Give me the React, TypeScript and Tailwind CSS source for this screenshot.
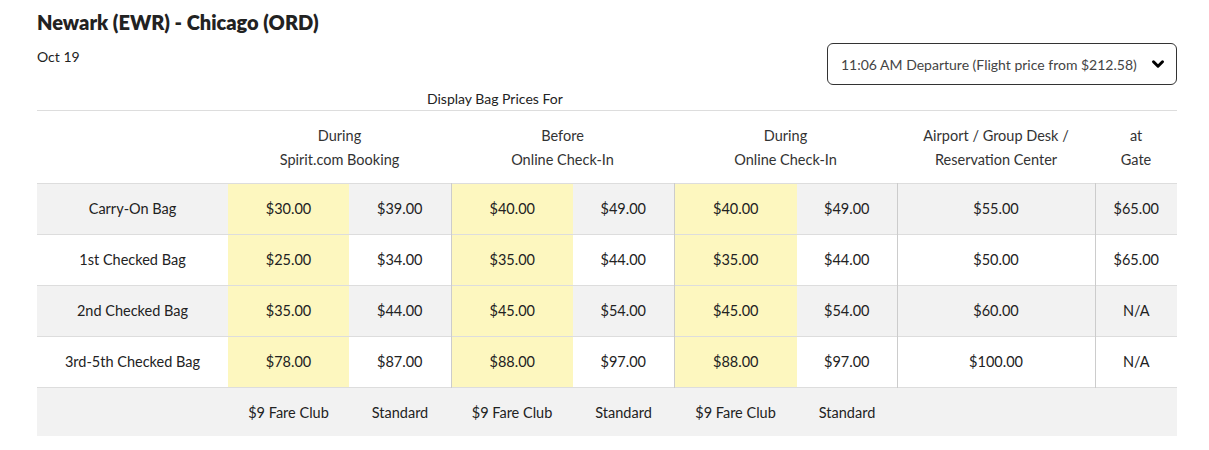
import { ChevronDown } from 'lucide-react';

const rows = [
  { label: 'Carry-On Bag', p: ['$30.00', '$39.00', '$40.00', '$49.00', '$40.00', '$49.00', '$55.00', '$65.00'] },
  { label: '1st Checked Bag', p: ['$25.00', '$34.00', '$35.00', '$44.00', '$35.00', '$44.00', '$50.00', '$65.00'] },
  { label: '2nd Checked Bag', p: ['$35.00', '$44.00', '$45.00', '$54.00', '$45.00', '$54.00', '$60.00', 'N/A'] },
  { label: '3rd-5th Checked Bag', p: ['$78.00', '$87.00', '$88.00', '$97.00', '$88.00', '$97.00', '$100.00', 'N/A'] },
];

const widths = ['w-[191px]', 'w-[121px]', 'w-[102px]', 'w-[122px]', 'w-[101px]', 'w-[123px]', 'w-[100px]', 'w-[198px]', 'w-[82px]'];

const App = () => {
  return (
    <div className="w-[1214px] pl-[37px] pr-[37px] pt-[8px] text-[#222] text-[14.5px]" style={{ fontFamily: 'Lato, "Open Sans", sans-serif' }}>
      <h1 className="text-[20px] font-extrabold leading-[28px]">Newark (EWR) - Chicago (ORD)</h1>
      <div className="flex justify-between items-start">
        <div className="mt-[10px] text-[14px]">Oct 19</div>
        <div className="mt-[7px] w-[350px] h-[42px] border border-[#333] rounded-[6px] flex items-center justify-between pl-[13px] pr-[9px] text-[#444] text-[14px]">
          <span>11:06 AM Departure (Flight price from $212.58)</span>
          <ChevronDown size={18} strokeWidth={4} className="text-black" />
        </div>
      </div>
      <div className="h-[25px] pl-[390px] pt-[5px] text-[14px] leading-[18px]">Display Bag Prices For</div>
      <table className="w-[1140px] border-collapse table-fixed text-center">
        <colgroup>
          {widths.map((w, i) => <col key={i} className={w} />)}
        </colgroup>
        <thead>
          <tr className="h-[73px] border-t border-[#ddd] leading-[24px] text-[#333]">
            <th className="font-normal" />
            <th className="font-normal pt-[2px]" colSpan={2}>During<br />Spirit.com Booking</th>
            <th className="font-normal pt-[2px]" colSpan={2}>Before<br />Online Check-In</th>
            <th className="font-normal pt-[2px]" colSpan={2}>During<br />Online Check-In</th>
            <th className="font-normal pt-[2px]">Airport / Group Desk /<br />Reservation Center</th>
            <th className="font-normal pt-[2px]">at<br />Gate</th>
          </tr>
        </thead>
        <tbody>
          {rows.map((r, i) => (
            <tr key={r.label} className={`h-[51px] border-t border-[#ddd] ${i % 2 === 0 ? 'bg-[#f2f2f2]' : 'bg-white'}`}>
              <td>{r.label}</td>
              {r.p.map((v, j) => (
                <td
                  key={j}
                  className={`${j % 2 === 0 && j < 6 ? 'bg-[#fdf7bf]' : ''} ${j === 2 || j === 4 || j === 6 || j === 7 ? 'border-l border-[#ccc]' : ''}`}
                >
                  {v}
                </td>
              ))}
            </tr>
          ))}
          <tr className="h-[48px] border-t border-[#ddd] bg-[#f2f2f2]">
            <td />
            <td className="pt-[2px]">$9 Fare Club</td>
            <td className="pt-[2px]">Standard</td>
            <td className="pt-[2px]">$9 Fare Club</td>
            <td className="pt-[2px]">Standard</td>
            <td className="pt-[2px]">$9 Fare Club</td>
            <td className="pt-[2px]">Standard</td>
            <td />
            <td />
          </tr>
        </tbody>
      </table>
    </div>
  );
};

export default App;
